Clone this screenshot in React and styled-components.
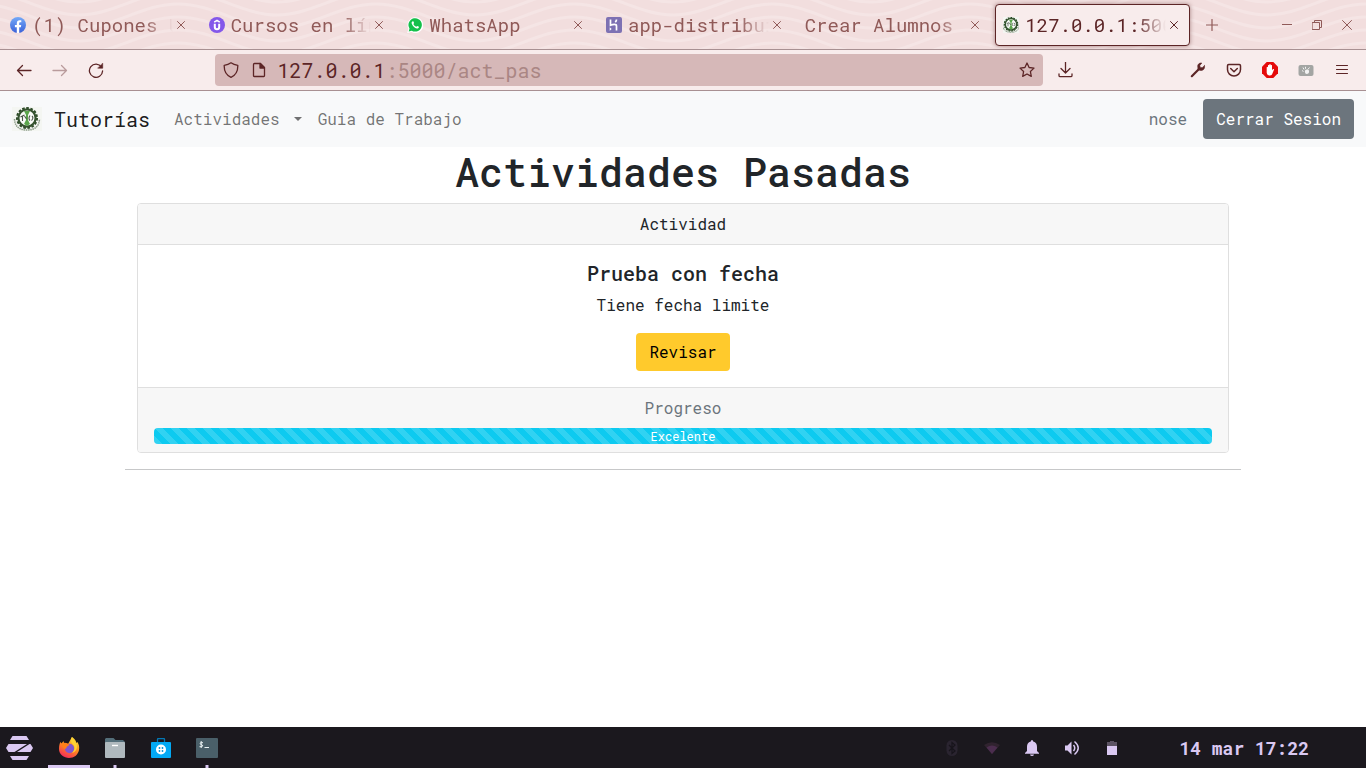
import React from "react";
import styled, { createGlobalStyle } from "styled-components";

const Global = createGlobalStyle`
  *, *::before, *::after { box-sizing: border-box; }
  body { margin: 0; background: #fff; color: #212529; }
  body, button, input { font-family: "Roboto Mono", "DejaVu Sans Mono", monospace; font-size: 16px; line-height: 24px; }
  button { border: 0; padding: 0; margin: 0; background: none; color: inherit; cursor: pointer; }
  a { color: inherit; text-decoration: none; }
  svg { display: block; flex: none; }
`;

const Screen = styled.div`
  min-height: 100vh;
  display: flex;
  flex-direction: column;
`;

/* ---------- browser chrome ---------- */
const TabBar = styled.header`
  position: relative;
  display: flex;
  align-items: center;
  height: 50px;
  background: #f2dede;
  border-bottom: 1px solid #a89092;
  color: #905a58;
`;
const Waves = styled.svg`
  position: absolute;
  inset: 0;
  width: 100%;
  height: 100%;
`;
const TabStrip = styled.div`
  position: relative;
  flex: 1;
  min-width: 0;
  display: flex;
`;
const Tab = styled.div`
  flex: 1 1 0;
  min-width: 0;
  height: 42px;
  margin: 0 2px;
  padding: 0 7px;
  display: flex;
  align-items: center;
  gap: 6px;
  border: 1px solid ${(p) => (p.$active ? "#5c2526" : "transparent")};
  border-radius: 4px;
  background: ${(p) => (p.$active ? "#f8ecec" : "transparent")};
  color: ${(p) => (p.$active ? "#5c2526" : "inherit")};
  box-shadow: ${(p) => (p.$active ? "0 0 4px rgba(92, 37, 38, 0.5)" : "none")};
`;
const TabTitle = styled.span`
  flex: 1;
  min-width: 0;
  overflow: hidden;
  white-space: nowrap;
  font-size: 19px;
  mask-image: linear-gradient(to left, transparent, #000 30px);
`;
const TabClose = styled.button`
  width: 16px;
  height: 16px;
  margin-left: -6px;
  display: grid;
  place-items: center;
`;
const WindowControls = styled.div`
  position: relative;
  width: 174px;
  padding: 0 4px 0 8px;
  display: flex;
  align-items: center;
`;
const WindowButton = styled.button`
  width: ${(p) => p.$width || 30}px;
  height: 30px;
  display: grid;
  place-items: center;
  margin-right: ${(p) => (p.$push ? "auto" : 0)};
`;
const Toolbar = styled.div`
  display: grid;
  grid-template-columns: auto 101fr 828fr auto 96fr auto;
  align-items: center;
  height: 41px;
  padding: 0 6px;
  background: #f8ecec;
  border-bottom: 1px solid #a89092;
  color: #5c2526;
`;
const ToolGroup = styled.div`
  display: flex;
`;
const ToolButton = styled.button`
  width: 36px;
  height: 32px;
  display: grid;
  place-items: center;
  opacity: ${(p) => (p.disabled ? 0.4 : 1)};
`;
const AddressBar = styled.div`
  grid-column: 3;
  height: 32px;
  margin-right: 5px;
  padding: 0 8px;
  display: flex;
  align-items: center;
  gap: 10px;
  border-radius: 4px;
  background: #d6b8b8;
`;
const SiteInfo = styled.div`
  display: flex;
  gap: 12px;
`;
const Address = styled.a`
  flex: 1;
  min-width: 0;
  overflow: hidden;
  white-space: nowrap;
  font-size: 20px;
`;
const Faded = styled.span`
  color: #aa8684;
`;

/* ---------- site ---------- */
const SiteNav = styled.nav`
  display: flex;
  align-items: center;
  padding: 8px 12px;
  background: #f8f9fa;
`;
const Brand = styled.a`
  display: flex;
  align-items: center;
  gap: 12px;
  margin-right: 16px;
  font-size: 20px;
  color: rgba(0, 0, 0, 0.9);
`;
const NavLink = styled.a`
  display: flex;
  align-items: center;
  gap: 14px;
  padding: 8px;
  color: rgba(0, 0, 0, 0.55);
`;
const Caret = styled.span`
  border: 4px solid transparent;
  border-top-color: currentColor;
  border-bottom: 0;
`;
const User = styled.span`
  margin-left: auto;
  padding: 8px 16px 8px 8px;
  color: #6c757d;
`;
const Button = styled.button`
  padding: ${(p) => (p.$tall ? 8 : 7)}px 13px;
  border-radius: 4px;
  background: ${(p) => (p.$tone === "warning" ? "#ffca2c" : "#6c757d")};
  color: ${(p) => (p.$tone === "warning" ? "#000" : "#fff")};
`;
const Content = styled.main`
  flex: 1;
  width: 100%;
  max-width: 1140px;
  margin: 0 auto;
  padding: 0 12px;
  text-align: center;
`;
const Title = styled.h1`
  margin: 0 0 6px;
  font-size: 40px;
  line-height: 50px;
  font-weight: 500;
`;
const Card = styled.article`
  margin: 0 12px;
  border: 1px solid #dfdfdf;
  border-radius: 4px;
  overflow: hidden;
`;
const CardHeader = styled.div`
  padding: 8px 16px;
  background: #f7f7f7;
  border-bottom: 1px solid #dfdfdf;
`;
const CardBody = styled.div`
  padding: 16px;
`;
const CardTitle = styled.h2`
  margin: 0 0 8px;
  font-size: 20px;
  line-height: 24px;
  font-weight: 500;
`;
const CardText = styled.p`
  margin: 0 0 16px;
`;
const CardFooter = styled.div`
  padding: 8px 16px;
  background: #f7f7f7;
  border-top: 1px solid #dfdfdf;
  color: #6c757d;
`;
const Progress = styled.div`
  margin-top: 8px;
  height: 16px;
  border-radius: 4px;
  overflow: hidden;
  background: #e9ecef;
`;
const ProgressFill = styled.div`
  height: 100%;
  font-size: 12px;
  line-height: 16px;
  color: #fff;
  background-color: #0dcaf0;
  background-image: linear-gradient(45deg, rgba(255, 255, 255, 0.15) 25%, transparent 25%, transparent 50%, rgba(255, 255, 255, 0.15) 50%, rgba(255, 255, 255, 0.15) 75%, transparent 75%, transparent);
  background-size: 16px 16px;
`;
const Rule = styled.hr`
  margin: 16px 0;
  height: 1px;
  border: 0;
  background: #c7c8c9;
`;

/* ---------- desktop panel ---------- */
const Taskbar = styled.footer`
  display: flex;
  align-items: center;
  height: 41px;
  background: #1b181e;
  color: #dac8f2;
`;
const TaskButton = styled.button`
  position: relative;
  width: 46px;
  height: 41px;
  display: grid;
  place-items: center;

  &::after {
    content: "";
    position: absolute;
    left: 50%;
    bottom: 0;
    width: ${(p) => (p.$state === "active" ? 42 : p.$state === "open" ? 3 : 0)}px;
    height: 3px;
    transform: translateX(-50%);
    background: #dac8f2;
  }
`;
const StartButton = styled(TaskButton)`
  padding-right: 6px;
`;
const Tray = styled.div`
  margin-left: auto;
  padding-right: 47px;
  display: flex;
`;
const TrayButton = styled.button`
  width: 40px;
  height: 40px;
  display: grid;
  place-items: center;
`;
const Clock = styled.time`
  padding-right: 57px;
  font-size: 18px;
  font-weight: 700;
`;

/* ---------- drawings ---------- */
const Line = ({ size = 16, box = 16, width = 1.3, children }) => (
  <svg width={size} height={size} viewBox={`0 0 ${box} ${box}`} fill="none" stroke="currentColor" strokeWidth={width} strokeLinecap="round" strokeLinejoin="round">
    {children}
  </svg>
);

const wavePath = (y) => `M-119 ${y}` + " c35 0 63 -24 99 -24 s64 24 99 24".repeat(15);
const WavePattern = () => (
  <Waves aria-hidden="true" fill="none" stroke="#f5e5e5" strokeWidth="3">
    {[-11, 2, 15, 28, 41, 54, 67, 80].map((y) => (
      <path key={y} d={wavePath(y)} />
    ))}
  </Waves>
);

const Cross = () => (
  <Line size={8} box={8} width={1}>
    <path d="M.5.5l7 7M7.5.5l-7 7" />
  </Line>
);
const Facebook = () => (
  <svg width="16" height="16" viewBox="0 0 16 16">
    <defs>
      <linearGradient id="fb" x1="0" y1="0" x2="0" y2="1">
        <stop stopColor="#74a9f8" />
        <stop offset="1" stopColor="#3b62d9" />
      </linearGradient>
    </defs>
    <circle cx="8" cy="8" r="8" fill="url(#fb)" />
    <path d="M6.8 16V10.3H4.9V8h1.900V6.400c0-2 1.100-3.100 2.900-3.100.8 0 1.600.1 1.600.1v1.900h-.9c-.9 0-1.200.6-1.200 1.100V8h2l-.3 2.300H9.200V16z" fill="#fff" />
  </svg>
);
const Udemy = () => (
  <svg width="16" height="16" viewBox="0 0 16 16" fill="none" stroke="#fff">
    <circle cx="8" cy="8" r="8" fill="#8458ea" stroke="none" />
    <path d="M5.2 5.2L8 3.5l2.8 1.7" strokeWidth="1.5" />
    <path d="M5.8 6.7v3.4c0 3 4.4 3 4.4 0V6.7" strokeWidth="2" />
  </svg>
);
const WhatsApp = () => (
  <svg width="16" height="16" viewBox="0 0 16 16">
    <path d="M.2 15.9l1.2-4.1A7.9 7.9 0 1 1 4.5 15z" fill="#fff" />
    <path d="M1.7 14.4l.8-2.9a6.7 6.7 0 1 1 2.3 2.2z" fill="#14c04b" />
    <path d="M5.7 4.2c-.9.4-1.3 1.3-1 2.4.7 2.5 3 4.7 5.200 5 1.200.1 2-.6 2.100-1.800L10.200 8.900l-.9.9C8 9.300 7 8.300 6.400 7l.7-.9-.8-1.900z" fill="#fff" />
  </svg>
);
const Heroku = () => (
  <svg width="16" height="16" viewBox="0 0 16 16">
    <rect width="16" height="16" rx="2" fill="#7d71b3" />
    <path d="M4.500 2.500v5.800c2.500-1 6-1.500 6 .6v4.600M10.500 2.500c0 1.200-.5 2-1.200 2.800" fill="none" stroke="#fff" strokeWidth="1.7" />
    <path d="M3.700 10.200v3.500l2-1.700z" fill="#fff" />
  </svg>
);
const School = ({ width = 30, height = 24 }) => (
  <svg width={width} height={height} viewBox="3 0 24 24">
    <rect x="0" width="30" height="24" fill="#f4f6f2" />
    <path d="M2.500 12c.5 8 5 11 12.500 11s12-3 12.500-11" fill="none" stroke="#8a9a86" strokeWidth="1.5" strokeDasharray="1.5 .7" />
    <circle cx="15" cy="11" r="10" fill="none" stroke="#2d4b28" strokeWidth="2" strokeDasharray="2.6 1.59" />
    <circle cx="15" cy="11" r="8.6" fill="#fbfcfa" stroke="#35532f" strokeWidth="2.2" />
    <path d="M12 4h6l-2 4v5l2 4-3 2-3-2 2-4V8z" fill="#5ba54c" />
    <path d="M8.500 10l4-2M10.500 9v5M12.500 9l2 3M18 8.500q-2 3 0 5M20 9q2 2-.5 4.500" fill="none" stroke="#4a5549" strokeWidth="1.1" />
  </svg>
);

const tabs = [
  { title: "(1) Cupones U", icon: <Facebook /> },
  { title: "Cursos en lín", icon: <Udemy /> },
  { title: "WhatsApp", icon: <WhatsApp /> },
  { title: "app-distribui", icon: <Heroku /> },
  { title: "Crear Alumnos" },
  { title: "127.0.0.1:5000", icon: <School width={16} height={16} />, active: true },
];

const Browser = () => (
  <>
    <TabBar>
      <WavePattern />
      <TabStrip>
        {tabs.map((t) => (
          <Tab key={t.title} $active={t.active}>
            {t.icon}
            <TabTitle>{t.title}</TabTitle>
            <TabClose aria-label="Cerrar pestaña"><Cross /></TabClose>
          </Tab>
        ))}
      </TabStrip>
      <WindowControls>
        <WindowButton $width={24} $push aria-label="Nueva pestaña">
          <Line size={12} box={12} width={1.2}><path d="M6 .5v11M.5 6h11" /></Line>
        </WindowButton>
        <WindowButton aria-label="Minimizar">
          <Line size={10} box={10} width={1}><path d="M0 4.500h10" /></Line>
        </WindowButton>
        <WindowButton aria-label="Restaurar">
          <Line size={10} box={10} width={1}><path d="M.5 2.500h7v7h-7zM2.500 2.500v-2h7v7h-2" /></Line>
        </WindowButton>
        <WindowButton aria-label="Cerrar">
          <Line size={10} box={10} width={1}><path d="M.5.5l9 9M9.500.5l-9 9" /></Line>
        </WindowButton>
      </WindowControls>
    </TabBar>
    <Toolbar>
      <ToolGroup>
        <ToolButton aria-label="Atrás"><Line><path d="M15 8.500H1.500M6.500 3.500l-5 5 5 5" /></Line></ToolButton>
        <ToolButton disabled aria-label="Adelante"><Line><path d="M1 8.500h13.500M9.500 3.500l5 5-5 5" /></Line></ToolButton>
        <ToolButton aria-label="Recargar">
          <Line>
            <path d="M13.500 5A6.600 6.600 0 1 0 14.600 9" />
            <path d="M14.700 1.500v4.700H10z" fill="currentColor" strokeWidth=".6" />
          </Line>
        </ToolButton>
      </ToolGroup>
      <AddressBar>
        <SiteInfo>
          <Line><path d="M8 .8c2 1.500 4 2.200 6.800 2.500.2 5.700-1.800 9.900-6.800 12C3 13.200 1 9 1.200 3.300 4 3 6 2.300 8 .8z" /></Line>
          <Line>
            <path d="M3.500 1.500h6l4 4v8.200q0 .8-.8.8H3.300q-.8 0-.8-.8V2.500q0-1 1-1z" />
            <path d="M9 1.500V6h4.500z" fill="currentColor" />
          </Line>
        </SiteInfo>
        <Address href="#url">127.0.0.1<Faded>:5000/act_pas</Faded></Address>
        <Line><path d="M8 1l2.100 4.500 4.900.6-3.600 3.400.9 4.900L8 12l-4.300 2.400.9-4.900L1 6.100l4.900-.6z" /></Line>
      </AddressBar>
      <ToolButton aria-label="Descargas">
        <Line><path d="M7.500 0v10.500M3 6.500l4.500 4.500L12 6.500M1 12v1.500q0 1.200 1.200 1.200h10.600q1.200 0 1.200-1.200V12" /></Line>
      </ToolButton>
      <span />
      <ToolGroup>
        <ToolButton aria-label="Herramientas">
          <Line>
            <path d="M1.800 14.200L9 7" strokeWidth="2.2" />
            <path d="M14.500 3.700l-2.300 2-2-.3-.4-2 2-2.400c-2.600-.4-4.600 1.500-4 4.200L8 7.700l2.500.7c2.800.4 4.700-2 4-4.700z" fill="currentColor" strokeWidth=".6" />
          </Line>
        </ToolButton>
        <ToolButton aria-label="Pocket">
          <Line width={1.5}><path d="M2.700 2.500h10.600q1.200 0 1.200 1.200V7.500a6.500 6.500 0 0 1-13 0V3.700q0-1.200 1.200-1.200zM4.700 6.500L8 9.700l3.300-3.200" /></Line>
        </ToolButton>
        <ToolButton aria-label="AdBlock">
          <svg width="16" height="16" viewBox="0 0 16 16">
            <path d="M4.700 0h6.600L16 4.700v6.600L11.300 16H4.700L0 11.300V4.700z" fill="#e50b0b" />
            <path d="M4.700 5.200q.8-.8 1.300 0V3.300q.7-.8 1.300 0v-.8q.7-.8 1.400 0v.8q.7-.8 1.300 0v5l1-1.200q1-.4 1.100.4L10 12.500q-1 1.200-3 .9-2.300-.4-2.300-2.600z" fill="#fff" />
          </svg>
        </ToolButton>
        <ToolButton aria-label="Extensión">
          <svg width="16" height="16" viewBox="0 0 16 16">
            <rect x=".5" y="3" width="15" height="11" rx="2" fill="#a3a5a3" />
            <path d="M5 5.500l1 2M7.500 4.800v2M4 8.500l1.500 1M11.500 5.500L9.800 7.500" fill="none" stroke="#f3f3f3" strokeWidth="1" />
            <path d="M7 8.500q2-2 4 0 .5 3-2 3.500-2.500 0-2-3.500z" fill="#f3f3f3" />
          </svg>
        </ToolButton>
        <ToolButton aria-label="Menú"><Line width={1.1}><path d="M2.500 3.500h11M2.500 7.500h11M2.500 11.500h11" /></Line></ToolButton>
      </ToolGroup>
    </Toolbar>
  </>
);

const Site = () => (
  <>
    <SiteNav>
      <Brand href="#inicio"><School />Tutorías</Brand>
      <NavLink href="#actividades">Actividades<Caret /></NavLink>
      <NavLink href="#guia">Guia de Trabajo</NavLink>
      <User>nose</User>
      <Button $tall>Cerrar Sesion</Button>
    </SiteNav>
    <Content>
      <Title>Actividades Pasadas</Title>
      <Card>
        <CardHeader>Actividad</CardHeader>
        <CardBody>
          <CardTitle>Prueba con fecha</CardTitle>
          <CardText>Tiene fecha limite</CardText>
          <Button $tone="warning">Revisar</Button>
        </CardBody>
        <CardFooter>
          Progreso
          <Progress role="progressbar" aria-label="Progreso" aria-valuenow={100}>
            <ProgressFill>Excelente</ProgressFill>
          </Progress>
        </CardFooter>
      </Card>
      <Rule />
    </Content>
  </>
);

const Desktop = () => (
  <Taskbar>
    <StartButton aria-label="Menú de aplicaciones">
      <svg width="28" height="24" viewBox="0 0 28 24" fill="currentColor">
        <path d="M6.500 0h14L23 4H4zM4 20h19l-2.500 4h-14zM2.500 8H21L8.500 16h-6L0 12zM24.500 8L27 12l-2.500 4H11L23.500 8z" />
      </svg>
    </StartButton>
    <TaskButton $state="active" aria-label="Firefox">
      <svg width="22" height="22" viewBox="0 0 22 22">
        <defs>
          <linearGradient id="fox" x1=".8" y1="0" x2=".3" y2="1">
            <stop stopColor="#ffe23c" />
            <stop offset=".5" stopColor="#ff8a1e" />
            <stop offset="1" stopColor="#f5295c" />
          </linearGradient>
        </defs>
        <path d="M14 0c3 2 4 4 4.500 6l1-1c1.500 2.500 2 5 1.500 8C20 18 16 21 11 21S1 17.500 1 12c0-3 .5-5.500 1.500-7l1 1.500 2-2.500.5 2 4 1z" fill="url(#fox)" />
        <circle cx="11.500" cy="11.500" r="4.700" fill="#8157cf" />
        <path d="M3.500 6.500c3.500-1.500 5.500-1 8 1.500L9 9.500 8 11.500c-2 1-4 -1-4.500-5z" fill="#ff8018" />
        <path d="M14 0c-2 3-1 5.500 1.500 8 2 3 .5 6-1.500 8 4-1 6-5 4.500-9.500z" fill="#ffd235" />
      </svg>
    </TaskButton>
    <TaskButton $state="open" aria-label="Archivos">
      <svg width="20" height="20" viewBox="0 0 20 20">
        <path d="M1 0h7.500l2 2H18l2 2v4H0V1z" fill="#546e7a" />
        <rect y="4" width="20" height="16" rx="1" fill="#b0b9be" />
        <path d="M7 7.500h6" stroke="#fff" strokeWidth="1.4" />
      </svg>
    </TaskButton>
    <TaskButton aria-label="Software">
      <svg width="20" height="20" viewBox="0 0 20 20">
        <path d="M6.500 4V1.500q0-1 1-1h5q1 0 1 1V4" fill="none" stroke="#0378b5" strokeWidth="1.3" />
        <rect y="4" width="20" height="16" rx="1" fill="#03a9f4" />
        <circle cx="10" cy="11.500" r="5" fill="#fff" />
        <circle cx="8.500" cy="10" r=".9" fill="#0391d4" />
        <circle cx="11.500" cy="10" r=".9" fill="#0391d4" />
        <circle cx="8.500" cy="13" r=".9" fill="#0391d4" />
        <circle cx="11.500" cy="13" r=".9" fill="#0391d4" />
      </svg>
    </TaskButton>
    <TaskButton $state="open" aria-label="Terminal">
      <svg width="22" height="20" viewBox="0 0 22 20">
        <rect width="22" height="20" rx="1" fill="#4a5f69" />
        <path d="M7 4.700H4.500q-1 1.200.3 1.700l1.500.6q1 1-.3 1.700H3.500M5.200 3v7M8.500 9.500h4.500" fill="none" stroke="#e8f0f2" strokeWidth="1" />
      </svg>
    </TaskButton>
    <Tray>
      <TrayButton aria-label="Bluetooth">
        <svg width="12" height="16" viewBox="0 0 12 16">
          <rect x=".5" width="11" height="16" rx="5.500" fill="#2a2430" />
          <path d="M3 5l6 6-3 2.500v-11L9 5l-6 6" fill="none" stroke="#17141b" strokeWidth="1.2" />
        </svg>
      </TrayButton>
      <TrayButton aria-label="Wifi">
        <svg width="16" height="12" viewBox="0 0 16 12">
          <path d="M0 3Q8-2.500 16 3l-8 9z" fill="#30232f" />
          <path d="M2.500 5.500Q8 1.500 13.500 5.500L8 12z" fill="#4b2d4e" />
        </svg>
      </TrayButton>
      <TrayButton aria-label="Notificaciones">
        <svg width="14" height="16" viewBox="0 0 14 16" fill="currentColor">
          <path d="M7 0q1.200 0 1.200 1.500C11 2.200 12 4.200 12 7v4l2 2v.7H0V13l2-2V7c0-2.800 1-4.800 3.800-5.500Q5.800 0 7 0zM5 14.500h4Q8.700 16 7 16t-2-1.500z" />
        </svg>
      </TrayButton>
      <TrayButton aria-label="Volumen">
        <svg width="16" height="16" viewBox="0 0 16 16" fill="none" stroke="currentColor" strokeWidth="1.500">
          <path d="M1 5.500h2.500l4-4v13l-4-4H1z" fill="currentColor" stroke="none" />
          <path d="M9.500 5q2.500 3 0 6M10.500 1.500q7.500 6.500 0 13" />
        </svg>
      </TrayButton>
      <TrayButton aria-label="Batería">
        <svg width="10" height="14" viewBox="0 0 10 14">
          <path d="M3 0h4v1h3v4H0V1h3z" fill="#5c5363" />
          <path d="M0 5h10v9H0z" fill="currentColor" />
        </svg>
      </TrayButton>
    </Tray>
    <Clock>14 mar 17:22</Clock>
  </Taskbar>
);

export default function App() {
  return (
    <Screen>
      <Global />
      <Browser />
      <Site />
      <Desktop />
    </Screen>
  );
}
